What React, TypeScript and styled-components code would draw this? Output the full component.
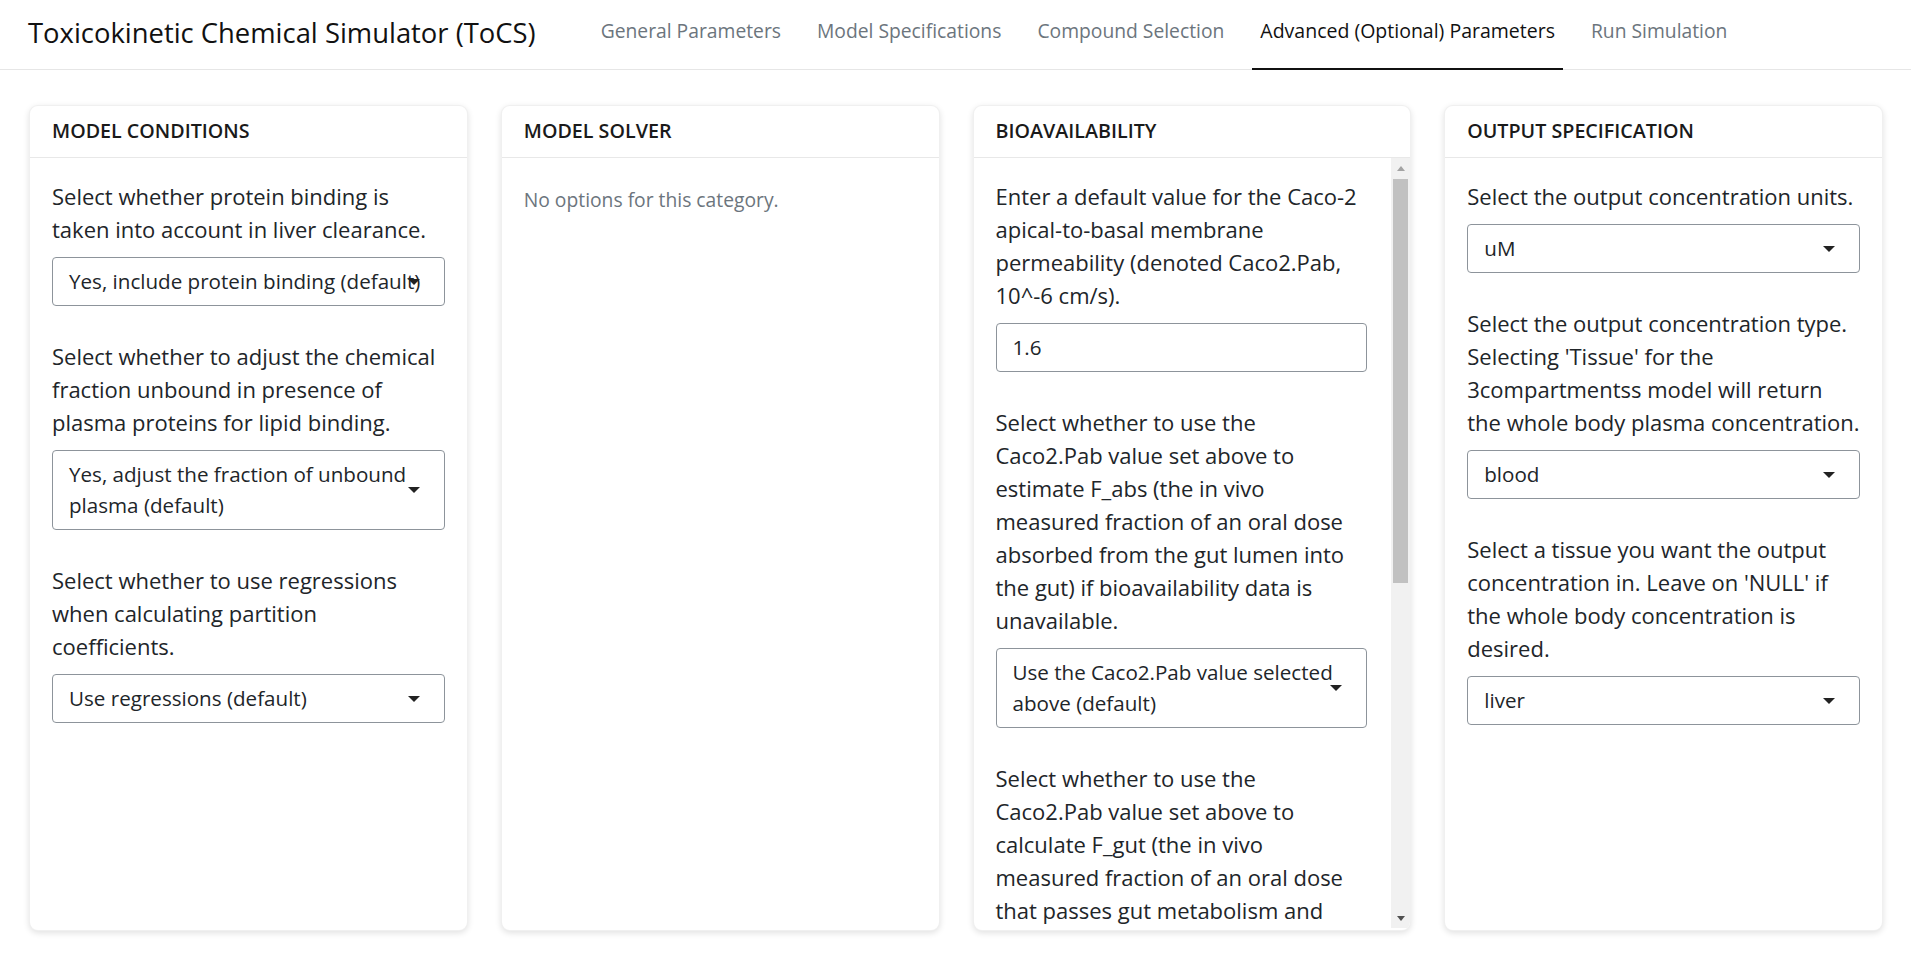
import React from "react";
import styled, { createGlobalStyle } from "styled-components";

const GlobalStyle = createGlobalStyle`
  html, body {
    margin: 0;
    padding: 0;
    background: #fff;
    font-family: "Open Sans", "Liberation Sans", sans-serif;
    color: #212529;
  }
  * {
    box-sizing: border-box;
  }
`;

// layout
const Page = styled.div`
  display: flex;
  flex-direction: column;
  height: 100vh;
`;

const Navbar = styled.nav`
  display: flex;
  align-items: stretch;
  height: 70px;
  padding-left: 28px;
  border-bottom: 1px solid #e6e6e6;
`;

const Brand = styled.div`
  display: flex;
  align-items: center;
  font-size: 27.4px;
  color: #111;
  margin-right: 57px;
  padding-bottom: 4px;
  white-space: nowrap;
`;

const Tabs = styled.ul`
  display: flex;
  gap: 20px;
  margin: 0;
  padding: 0;
  list-style: none;
`;

const Tab = styled.li<{ $active?: boolean }>`
  display: flex;
  align-items: center;
  padding: 0 8px 8px;
  font-size: ${(p) => (p.$active ? "19.5px" : "19.3px")};
  white-space: nowrap;
  color: ${(p) => (p.$active ? "#111" : "#6c757d")};
  border-bottom: 2px solid ${(p) => (p.$active ? "#111" : "transparent")};
  margin-bottom: -1px;
`;

const Main = styled.main`
  flex: 1;
  min-height: 0;
  display: flex;
  gap: 33px;
  padding: 35px 28px 31px 29px;
`;

const Card = styled.section`
  flex: 1;
  min-width: 0;
  display: flex;
  flex-direction: column;
  background: #fff;
  border: 1px solid rgba(0, 0, 0, 0.06);
  border-radius: 9px;
  box-shadow: 0 2px 6px rgba(0, 0, 0, 0.12);
  overflow: hidden;
`;

const CardHeader = styled.header`
  display: flex;
  align-items: center;
  height: 52px;
  flex-shrink: 0;
  padding: 0 22px 2px;
  font-size: 19.7px;
  font-weight: 600;
  color: #1a1a1a;
  border-bottom: 1px solid #e8e8e8;
`;

const CardBody = styled.div`
  flex: 1;
  min-height: 0;
  display: flex;
`;

const CardContent = styled.div<{ $scroll?: boolean }>`
  flex: 1;
  min-width: 0;
  overflow: hidden;
  padding: ${(p) => (p.$scroll ? "22px 24px 10px 22px" : "22px 22px 10px")};
`;

const ScrollTrack = styled.div`
  width: 19px;
  flex-shrink: 0;
  display: flex;
  flex-direction: column;
  background: #f1f1f1;
  margin-bottom: 2px;
`;

const ScrollButton = styled.div<{ $down?: boolean }>`
  height: 20px;
  flex-shrink: 0;
  display: flex;
  align-items: center;
  justify-content: center;

  &::after {
    content: "";
    width: 0;
    height: 0;
    border-left: 4.5px solid transparent;
    border-right: 4.5px solid transparent;
    ${(p) =>
      p.$down
        ? "border-top: 5px solid #505050;"
        : "border-bottom: 5px solid #a3a3a3;"}
  }
`;

const ScrollThumb = styled.div`
  height: 404px;
  margin: 1px 2px 0;
  background: #c1c1c1;
`;

const ScrollSpacer = styled.div`
  flex: 1;
`;

const FormGroup = styled.div`
  margin-bottom: 34px;
`;

const Label = styled.div`
  font-size: 22px;
  line-height: 33px;
  margin-bottom: 11px;
`;

const Muted = styled.p`
  margin: 5px 0 0;
  font-size: 19.3px;
  line-height: 30px;
  color: #6c757d;
`;

const SelectBox = styled.div`
  position: relative;
  border: 1px solid #8d949b;
  border-radius: 4px;
  padding: 8px 22px 8px 16px;
  font-size: 20.6px;
  line-height: 31px;
  color: #212529;
  background: #fff;
`;

const Caret = styled.span`
  position: absolute;
  right: 24px;
  top: 50%;
  margin-top: -3px;
  width: 0;
  height: 0;
  border-left: 6px solid transparent;
  border-right: 6px solid transparent;
  border-top: 6px solid #222;
`;

const TextInput = styled.input`
  display: block;
  width: 100%;
  border: 1px solid #8d949b;
  border-radius: 4px;
  padding: 8px 16px;
  font-family: inherit;
  font-size: 20.6px;
  line-height: 31px;
  color: #212529;
  background: #fff;
  outline: none;
`;

const Select = ({ value }: { value: string }) => (
  <SelectBox>
    {value}
    <Caret />
  </SelectBox>
);

const Scrollbar = () => (
  <ScrollTrack>
    <ScrollButton />
    <ScrollThumb />
    <ScrollSpacer />
    <ScrollButton $down />
  </ScrollTrack>
);

type Field = { label: string; value: string; input?: boolean };

const sections: { title: string; empty?: boolean; scroll?: boolean; fields: Field[] }[] = [
  {
    title: "MODEL CONDITIONS",
    fields: [
      {
        label: "Select whether protein binding is taken into account in liver clearance.",
        value: "Yes, include protein binding (default)",
      },
      {
        label:
          "Select whether to adjust the chemical fraction unbound in presence of plasma proteins for lipid binding.",
        value: "Yes, adjust the fraction of unbound plasma (default)",
      },
      {
        label: "Select whether to use regressions when calculating partition coefficients.",
        value: "Use regressions (default)",
      },
    ],
  },
  { title: "MODEL SOLVER", empty: true, fields: [] },
  {
    title: "BIOAVAILABILITY",
    scroll: true,
    fields: [
      {
        label:
          "Enter a default value for the Caco-2 apical-to-basal membrane permeability (denoted Caco2.Pab, 10^-6 cm/s).",
        value: "1.6",
        input: true,
      },
      {
        label:
          "Select whether to use the Caco2.Pab value set above to estimate F_abs (the in vivo measured fraction of an oral dose absorbed from the gut lumen into the gut) if bioavailability data is unavailable.",
        value: "Use the Caco2.Pab value selected above (default)",
      },
      {
        label:
          "Select whether to use the Caco2.Pab value set above to calculate F_gut (the in vivo measured fraction of an oral dose that passes gut metabolism and clearance) if bioavailability data is unavailable.",
        value: "Use the Caco2.Pab value selected above (default)",
      },
      {
        label:
          "Select whether to overwrite in vivo F_abs and F_gut data with the values estimated from Caco2.Pab.",
        value: "Do not overwrite in vivo values (default)",
      },
    ],
  },
  {
    title: "OUTPUT SPECIFICATION",
    fields: [
      { label: "Select the output concentration units.", value: "uM" },
      {
        label:
          "Select the output concentration type. Selecting 'Tissue' for the 3compartmentss model will return the whole body plasma concentration.",
        value: "blood",
      },
      {
        label:
          "Select a tissue you want the output concentration in. Leave on 'NULL' if the whole body concentration is desired.",
        value: "liver",
      },
    ],
  },
];

const tabs = [
  "General Parameters",
  "Model Specifications",
  "Compound Selection",
  "Advanced (Optional) Parameters",
  "Run Simulation",
];

export default function App() {
  return (
    <>
      <GlobalStyle />
      <Page>
        <Navbar>
          <Brand>Toxicokinetic Chemical Simulator (ToCS)</Brand>
          <Tabs>
            {tabs.map((t, i) => (
              <Tab key={t} $active={i === 3}>
                {t}
              </Tab>
            ))}
          </Tabs>
        </Navbar>
        <Main>
          {sections.map((s) => (
            <Card key={s.title}>
              <CardHeader>{s.title}</CardHeader>
              <CardBody>
                <CardContent $scroll={s.scroll}>
                  {s.empty && <Muted>No options for this category.</Muted>}
                  {s.fields.map((f, i) => (
                    <FormGroup key={i}>
                      <Label>{f.label}</Label>
                      {f.input ? (
                        <TextInput type="text" defaultValue={f.value} />
                      ) : (
                        <Select value={f.value} />
                      )}
                    </FormGroup>
                  ))}
                </CardContent>
                {s.scroll && <Scrollbar />}
              </CardBody>
            </Card>
          ))}
        </Main>
      </Page>
    </>
  );
}
